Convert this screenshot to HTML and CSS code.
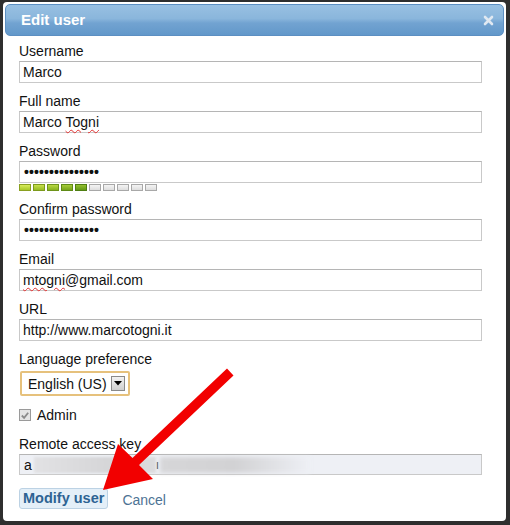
FILE: index.html
```html
<!DOCTYPE html>
<html lang="en">

<head>
  <meta charset="UTF-8" />
  <title>Edit user</title>
  <link rel="stylesheet" href="styles.css">
</head>

<body>
  <div class="dialog">
    <div class="titlebar">
      <span class="title">Edit user</span>
      <svg class="close" width="11" height="11" viewBox="0 0 11 11">
        <path d="M2 2 L9 9 M9 2 L2 9" stroke="#dfe8f1" stroke-width="2.6" stroke-linecap="round" />
      </svg>
    </div>
    <div class="form">
      <div class="field">
        <label>Username</label>
        <div class="input">Marco</div>
      </div>
      <div class="field">
        <label>Full name</label>
        <div class="input">Marco <span class="typo">Togni</span></div>
      </div>
      <div class="field">
        <label>Password</label>
        <div class="input dots">&bull;&bull;&bull;&bull;&bull;&bull;&bull;&bull;&bull;&bull;&bull;&bull;&bull;&bull;&bull;</div>
        <div class="meter">
          <span class="on s1"></span>
          <span class="on s2"></span>
          <span class="on s3"></span>
          <span class="on s4"></span>
          <span class="on s5"></span>
          <span></span>
          <span></span>
          <span></span>
          <span></span>
          <span></span>
        </div>
      </div>
      <div class="field">
        <label>Confirm password</label>
        <div class="input dots">&bull;&bull;&bull;&bull;&bull;&bull;&bull;&bull;&bull;&bull;&bull;&bull;&bull;&bull;&bull;</div>
      </div>
      <div class="field">
        <label>Email</label>
        <div class="input"><span class="typo">mtogni</span>@gmail.com</div>
      </div>
      <div class="field">
        <label>URL</label>
        <div class="input">http://www.marcotogni.it</div>
      </div>
      <div class="field">
        <label>Language preference</label>
        <div class="select">
          <span>English (US)</span>
          <span class="drop">
            <svg width="8" height="5" viewBox="0 0 8 5"><path d="M0 0 H8 L4 4.5 Z" fill="#000" /></svg>
          </span>
        </div>
      </div>
      <div class="check">
        <span class="box">
          <svg width="11" height="11" viewBox="0 0 11 11"><path d="M2 5.5 L4.5 8 L9 2.5" stroke="#8a8a8a" stroke-width="2" fill="none" /></svg>
        </span>
        <span>Admin</span>
      </div>
      <div class="field">
        <label>Remote access key</label>
        <div class="input key">a<span class="blur"></span><span class="bar">ı</span><span class="blur2"></span></div>
      </div>
      <div class="actions">
        <span class="btn">Modify user</span>
        <span class="cancel">Cancel</span>
      </div>
    </div>
  </div>
  <!-- red arrow pointing at the button -->
  <svg class="arrow" width="510" height="525" viewBox="0 0 510 525">
    <polygon points="227,368.5 233.5,375.5 139,465 153,479 103,490 118,444 132.5,458" fill="#f20000" />
  </svg>
</body>

</html>
```

FILE: styles.css
```css
body {
  margin: 0;
  padding: 0;
  background-color: #2e2e2e;
  font-family: "Liberation Sans", Arial, sans-serif;
  font-size: 14px;
  color: #111;
}

.dialog {
  width: 503px;
  height: 519px;
  margin: 2px 4px 4px 3px;
  padding: 2px;
  box-sizing: border-box;
  background-color: #fff;
  border-radius: 4px;
}

.titlebar {
  height: 32px;
  display: flex;
  align-items: center;
  justify-content: space-between;
  padding: 0 9px 0 15px;
  box-sizing: border-box;
  border: 1px solid #5c8fc2;
  border-radius: 5px;
  background: linear-gradient(#98c0e2, #8ab6dc 45%, #72a3d1 60%, #6298ca);
}

.title {
  color: #fff;
  font-weight: bold;
  font-size: 15px;
  margin-top: -1px;
}

.form {
  display: flex;
  flex-direction: column;
  padding: 7px 22px 0 14px;
}

.field {
  display: flex;
  flex-direction: column;
  margin-bottom: 10px;
}

.field label {
  line-height: 16px;
  margin-bottom: 2px;
}

.input {
  height: 22px;
  line-height: 20px;
  padding: 0 3px;
  box-sizing: border-box;
  border: 1px solid #c9c9c9;
  border-top-color: #b5b5b5;
  white-space: nowrap;
}

.dots {
  padding-left: 4px;
  font-weight: bold;
  letter-spacing: 0.1px;
}

.typo {
  text-decoration: underline wavy #e03030;
  text-decoration-thickness: 1px;
  text-underline-offset: 2px;
}

.meter {
  display: flex;
  gap: 2px;
  margin-top: 1px;
}

.meter span {
  width: 12px;
  height: 7px;
  box-sizing: border-box;
  border: 1px solid #a8a8a8;
  background: linear-gradient(#f4f4f4, #dedede);
}

.meter .s1 {
  border-color: #8aa020;
  background: linear-gradient(#d8ec5a, #a8c82a);
}

.meter .s2 {
  border-color: #7c9a1c;
  background: linear-gradient(#c8e04c, #96bc24);
}

.meter .s3 {
  border-color: #6e941a;
  background: linear-gradient(#b8d842, #86b01e);
}

.meter .s4 {
  border-color: #5e8a16;
  background: linear-gradient(#a6cc38, #76a41a);
}

.meter .s5 {
  border-color: #4e7e12;
  background: linear-gradient(#94c030, #629814);
}

.select {
  align-self: flex-start;
  display: flex;
  align-items: center;
  justify-content: space-between;
  width: 110px;
  height: 25px;
  margin-left: 1px;
  margin-top: 2px;
  padding: 0 3px 0 6px;
  box-sizing: border-box;
  border: 2px solid #e6c17c;
  border-radius: 2px;
  background-color: #fff;
  white-space: nowrap;
}

.drop {
  display: flex;
  align-items: center;
  justify-content: center;
  width: 14px;
  height: 15px;
  box-sizing: border-box;
  border: 1px solid #8a8a8a;
  background: linear-gradient(#f2f2f2, #cfcfcf);
}

.check {
  display: flex;
  align-items: center;
  gap: 6px;
  height: 16px;
  margin-top: 1px;
  margin-bottom: 13px;
}

.check .box {
  display: flex;
  width: 12px;
  height: 12px;
  box-sizing: border-box;
  border: 1px solid #9a9a9a;
  background-color: #e4e4e4;
  align-items: center;
  justify-content: center;
}

.key {
  display: flex;
  align-items: center;
  height: 21px;
  background-color: #eef0f5;
  padding-left: 4px;
}

.key .blur {
  width: 122px;
  height: 16px;
  margin-left: 2px;
  background: linear-gradient(90deg, #e2e2e4, #d6d6d8 60%, #dcdcde);
  filter: blur(1px);
}

.key .bar {
  width: 4px;
  color: #444;
  font-size: 12px;
}

.key .blur2 {
  width: 150px;
  height: 16px;
  background: linear-gradient(90deg, #d6d6d8, #d2d2d4 50%, #eef0f5);
  filter: blur(2px);
}

.actions {
  display: flex;
  align-items: center;
  gap: 14px;
  margin-top: 3px;
}

.btn {
  padding: 1px 3px 2px;
  font-weight: bold;
  font-size: 14.5px;
  color: #2d6393;
  background-color: #e4eff8;
  border: 1px solid #bcd2e4;
  border-radius: 3px;
}

.cancel {
  color: #4d7394;
  margin-top: 2px;
}

.arrow {
  position: absolute;
  left: 0;
  top: 0;
}
```
